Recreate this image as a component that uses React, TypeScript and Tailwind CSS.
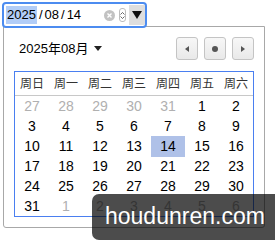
import React from "react";

const weeks = ["周日", "周一", "周二", "周三", "周四", "周五", "周六"];

type Day = { n: number; muted?: boolean; today?: boolean };

const prev = [27, 28, 29, 30, 31].map((n) => ({ n, muted: true }));
const cur = Array.from({ length: 31 }, (_, i) => ({ n: i + 1, today: i + 1 === 14 }));
const next = [1, 2, 3, 4, 5, 6].map((n) => ({ n, muted: true }));
const days: Day[] = [...prev, ...cur, ...next];

function NavButton({ children }: { children: React.ReactNode }) {
  return (
    <div className="w-[22px] h-[23px] flex items-center justify-center rounded-[3px] border border-[#c4c4c4] bg-gradient-to-b from-[#f7f7f7] to-[#e9e9e9]">
      {children}
    </div>
  );
}

export default function App() {
  const rows: Day[][] = [];
  for (let i = 0; i < days.length; i += 7) rows.push(days.slice(i, i + 7));

  return (
    <div className="relative w-[275px] h-[240px] bg-white overflow-hidden font-['Liberation_Sans','Noto_Sans_CJK_SC',sans-serif] text-black">
      {/* date input */}
      <div className="relative z-10 ml-[2px] mt-[2px] w-[145px] h-[26px] rounded-[4px] border-[2px] border-[#4c8cf0] bg-white flex items-center pl-[2px] text-[13px]">
        <span className="bg-[#b2cdf7] h-[18px] leading-[18px] px-[1px]">2025</span>
        <span className="mx-[2px]">/</span>
        <span>08</span>
        <span className="mx-[2px]">/</span>
        <span>14</span>
        <div className="ml-auto flex items-center">
          <div className="w-[11px] h-[11px] rounded-full bg-[#c2c2c2] flex items-center justify-center">
            <svg width="7" height="7" viewBox="0 0 7 7">
              <path d="M1.5 1.5 L5.5 5.5 M5.5 1.5 L1.5 5.5" stroke="white" strokeWidth="1.4" />
            </svg>
          </div>
          <div className="ml-[4px] w-[7px] h-[14px] rounded-[3px] border border-[#bdbdbd] flex flex-col items-center justify-center gap-[1px]">
            <svg width="5" height="3" viewBox="0 0 5 3"><path d="M0.5 2.5 L2.5 0.5 L4.5 2.5" stroke="#444" fill="none" strokeWidth="0.8" /></svg>
            <svg width="5" height="3" viewBox="0 0 5 3"><path d="M0.5 0.5 L2.5 2.5 L4.5 0.5" stroke="#444" fill="none" strokeWidth="0.8" /></svg>
          </div>
          <div className="ml-[3px] w-[16px] h-[20px] bg-[#dedede] flex items-center justify-center">
            <svg width="10" height="8" viewBox="0 0 10 8"><path d="M0 0 L10 0 L5 8 Z" fill="#111" /></svg>
          </div>
        </div>
      </div>

      {/* popup */}
      <div className="-mt-[2px] ml-[3px] w-[262px] border border-[#a8a8a8] rounded-b-[3px] px-[10px] pt-[10px] pb-[10px]">
        <div className="flex items-center h-[23px]">
          <span className="ml-[5px] text-[13px]">2025年08月</span>
          <svg className="ml-[6px]" width="8" height="5" viewBox="0 0 8 5"><path d="M0 0 L8 0 L4 5 Z" fill="#222" /></svg>
          <div className="ml-auto flex gap-[6px]">
            <NavButton>
              <svg width="4" height="6" viewBox="0 0 4 6"><path d="M4 0 L0 3 L4 6 Z" fill="#555" /></svg>
            </NavButton>
            <NavButton>
              <div className="w-[6px] h-[6px] rounded-full bg-[#555]" />
            </NavButton>
            <NavButton>
              <svg width="4" height="6" viewBox="0 0 4 6"><path d="M0 0 L4 3 L0 6 Z" fill="#555" /></svg>
            </NavButton>
          </div>
        </div>

        <div className="mt-[11px] w-[240px] border border-[#4a7ff0]">
          <div className="grid grid-cols-7 h-[24px] items-center border-b border-[#c8c8c8] text-[12px] text-[#333]">
            {weeks.map((w) => (
              <div key={w} className="text-center">{w}</div>
            ))}
          </div>
          {rows.map((r, i) => (
            <div key={i} className="grid grid-cols-7 h-[20px] text-[14px]">
              {r.map((d, j) => (
                <div
                  key={j}
                  className={
                    "flex items-center justify-center " +
                    (d.muted ? "text-[#b0b0b0] " : "text-black ") +
                    (d.today ? "bg-[#afc1e8]" : "")
                  }
                >
                  {d.n}
                </div>
              ))}
            </div>
          ))}
        </div>
      </div>

      {/* watermark */}
      <div className="absolute left-[92px] top-[194px] w-[200px] h-[46px] rounded-[7px] bg-black/70 flex items-center pl-[13px]">
        <span className="text-white text-[23px] leading-none pb-[2px]">houdunren.com</span>
      </div>
    </div>
  );
}
